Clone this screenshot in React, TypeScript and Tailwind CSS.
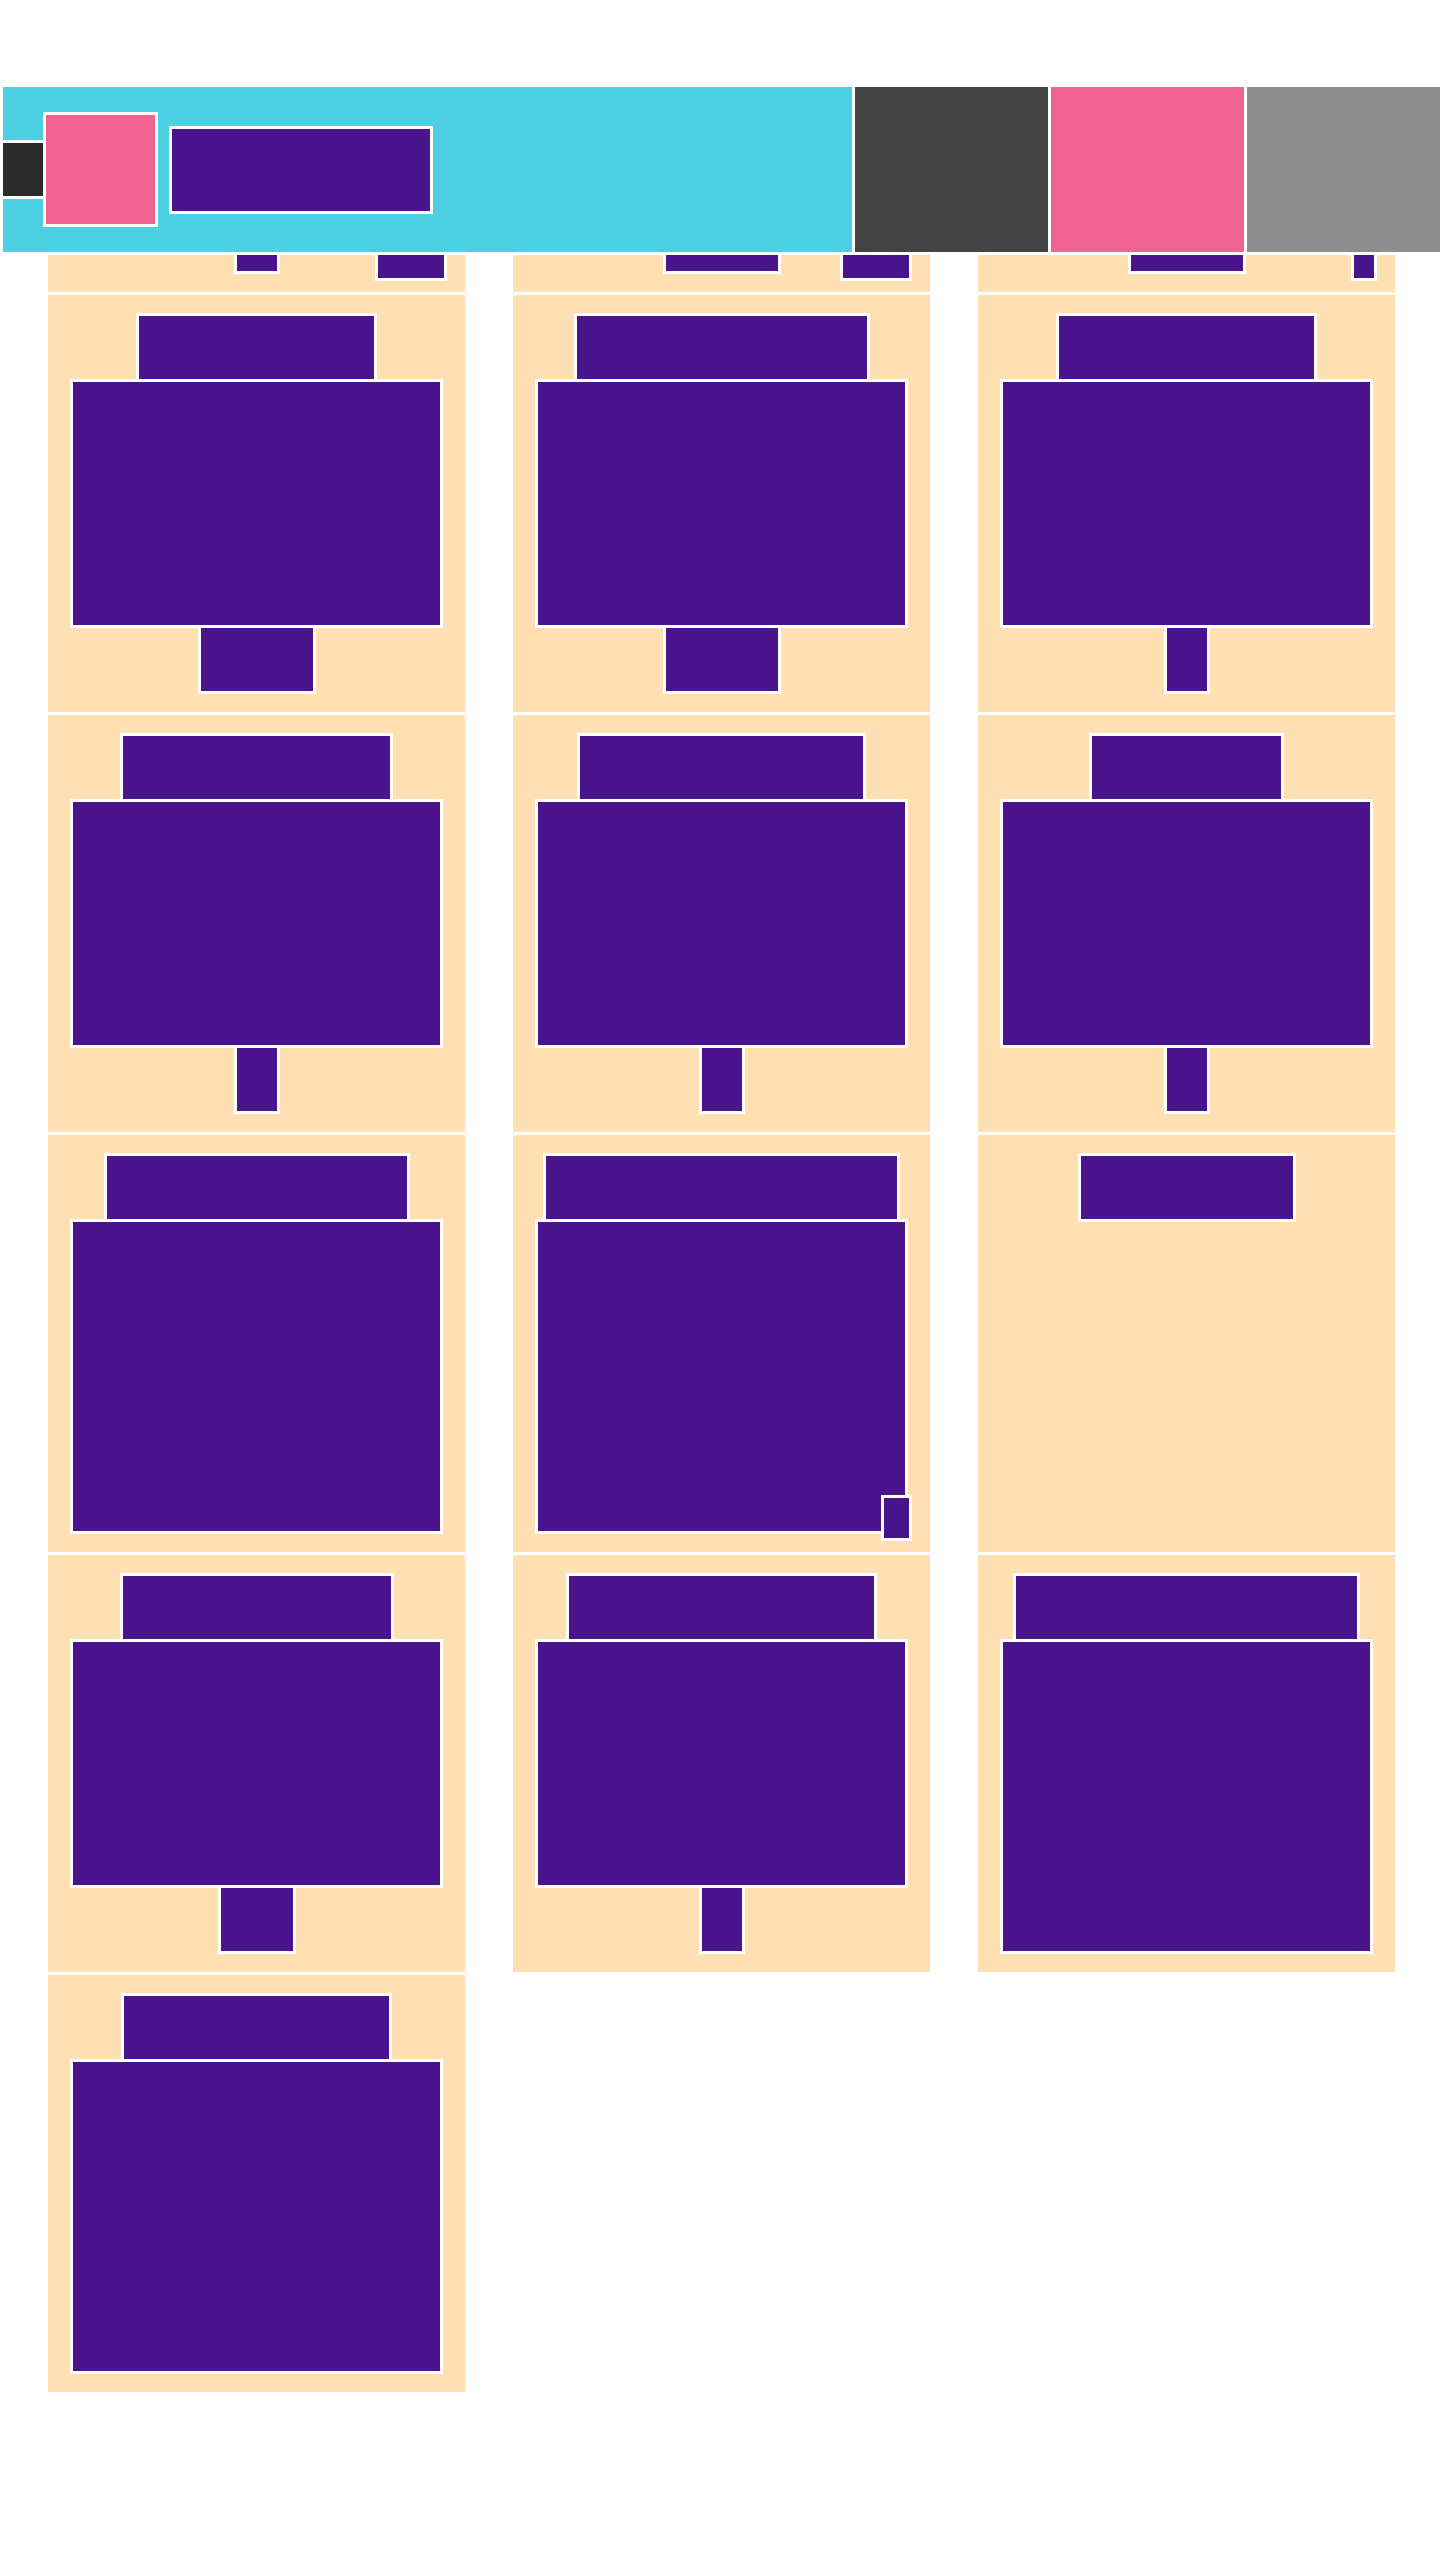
import React from "react";

// Wireframe of a product listing page: sticky header over a 3-column card grid
interface Card {
  title: number;
  price?: number;
  badge?: { w: number; h: number };
  empty?: boolean;
}

const cards: Card[] = [
  { title: 260, price: 40, badge: { w: 66, h: 40 } },
  { title: 300, price: 112, badge: { w: 66, h: 40 } },
  { title: 230, price: 112, badge: { w: 20, h: 40 } },
  { title: 235, price: 112 },
  { title: 290, price: 112 },
  { title: 255, price: 40 },
  { title: 267, price: 40 },
  { title: 283, price: 40 },
  { title: 189, price: 40 },
  { title: 300 },
  { title: 351, badge: { w: 25, h: 40 } },
  { title: 212, empty: true },
  { title: 268, price: 72 },
  { title: 305, price: 40 },
  { title: 341 },
  { title: 265 },
];

const block = "shrink-0 bg-[#4a148c] outline-3 outline-white";

const ProductCard: React.FC<{ card: Card }> = ({ card }) => (
  <div className="relative flex h-[417px] flex-col items-center gap-[3px] bg-[#ffe0b2] py-[21px]">
    <div className={`${block} h-[63px]`} style={{ width: card.title }} />
    {!card.empty && <div className="w-[367px] flex-1 bg-[#4a148c] outline-3 outline-white" />}
    {card.price && <div className={`${block} h-[63px]`} style={{ width: card.price }} />}
    {card.badge && (
      <div
        className="absolute right-[21px] bottom-[14px] bg-[#4a148c] outline-3 outline-white"
        style={{ width: card.badge.w, height: card.badge.h }}
      />
    )}
  </div>
);

const App: React.FC = () => {
  return (
    <div className="min-h-screen bg-white">
      {/* Sticky header */}
      <header className="fixed inset-x-0 top-0 z-10 flex h-[255px] gap-[3px] bg-white pt-[87px] pb-[3px] pl-[3px]">
        <div className="flex flex-1 items-center bg-[#4dd0e1]">
          <div className="h-[53px] w-[40px] shrink-0 bg-[#2a2a2a] outline-3 outline-white" />
          <div className="ml-[3px] size-[109px] shrink-0 bg-[#f06292] outline-3 outline-white" />
          <div className="ml-[17px] h-[82px] w-[258px] shrink-0 bg-[#4a148c] outline-3 outline-white" />
        </div>
        <div className="w-[193px] bg-[#444444]" />
        <div className="w-[193px] bg-[#f06292]" />
        <div className="w-[193px] bg-[#8e8e8e]" />
      </header>

      {/* Product grid (scrolled up under the header) */}
      <main className="-mt-[125px] grid grid-cols-[repeat(3,417px)] gap-x-12 gap-y-[3px] pl-12">
        {cards.map((card, i) => (
          <ProductCard key={i} card={card} />
        ))}
      </main>
    </div>
  );
};

export default App;
